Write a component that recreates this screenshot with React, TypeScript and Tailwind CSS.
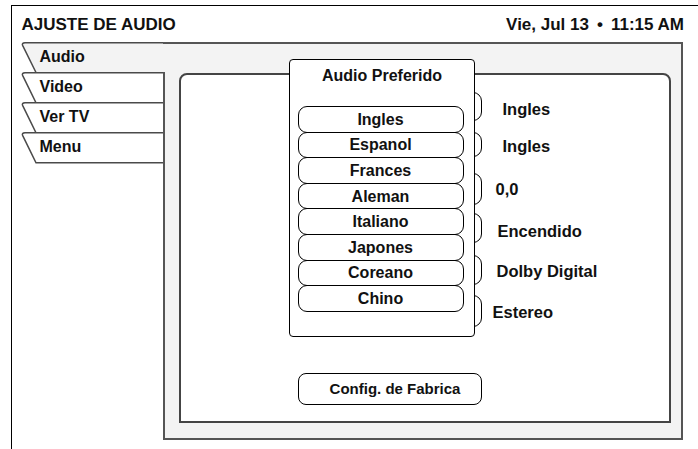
import React from "react";

const tabs = [
  { name: "Audio", active: true },
  { name: "Video" },
  { name: "Ver TV" },
  { name: "Menu" },
];

const languages = [
  "Ingles",
  "Espanol",
  "Frances",
  "Aleman",
  "Italiano",
  "Japones",
  "Coreano",
  "Chino",
];

// rows behind the dialog: the buttons are covered, only their right ends show
const settings = [
  { value: "Ingles", row: "h-[29px]", text: "ml-[21px] pt-[7px]" },
  { value: "Ingles", row: "mt-[11px] h-[25px]", text: "ml-[21px] pt-[5px]" },
  { value: "0,0", row: "mt-[16px] h-[32px]", text: "ml-[14px] pt-[2px]" },
  { value: "Encendido", row: "mt-[8px] h-[30px]", text: "ml-[16px] pt-[8px]" },
  { value: "Dolby Digital", row: "mt-[12px] h-[30px]", text: "ml-[15px] pt-[4px]" },
  { value: "Estereo", row: "mt-[10px] h-[32px]", text: "ml-[11px] pt-[4px]" },
];

const Tab: React.FC<{ name: string; active?: boolean }> = ({ name, active }) => (
  <div className="relative flex h-[30px] w-[142px] items-center">
    <svg
      className="absolute left-0 top-0 overflow-visible"
      width="142"
      height="31"
      viewBox="0 0 142 31"
    >
      <path
        d="M142 0.75 H4 Q0.5 0.75 1.6 3.4 L15 31 H142 Z"
        fill={active ? "#f3f3f3" : "#ffffff"}
        stroke="none"
      />
      <path
        d={
          active
            ? "M142 0.75 H4 Q0.5 0.75 1.6 3.4 L15 30.5"
            : "M142 0.75 H4 Q0.5 0.75 1.6 3.4 L15 30.75 H142"
        }
        fill="none"
        stroke="#4a4a4a"
        strokeWidth="1.5"
      />
    </svg>
    <span className="relative ml-[19px] text-[16px] leading-none">{name}</span>
  </div>
);

export default function App() {
  return (
    <div className="relative h-[449px] w-[698px] overflow-hidden bg-white pl-[11px] pt-[5px] font-['Liberation_Sans',Arial,sans-serif] font-bold text-[#111]">
      <div className="h-[444px] border-l-[1.5px] border-t-[1.5px] border-black">
        {/* Header */}
        <div className="flex h-[35.5px] items-center justify-between pl-[9.5px] pr-[14px] pt-[1px] text-[17px] leading-none">
          <span>AJUSTE DE AUDIO</span>
          <span className="flex items-center">
            Vie, Jul 13
            <span className="mx-[8px]">•</span>
            11:15 AM
          </span>
        </div>

        <div className="ml-[8.5px] w-[662px]">
          {/* Active tab row */}
          <div className="flex h-[30px]">
            <Tab name={tabs[0].name} active />
            <div className="flex-1 border-r-2 border-t-2 border-[#555] bg-[#f3f3f3]" />
          </div>

          <div className="flex h-[368px]">
            {/* Other tabs */}
            <div className="w-[142px]">
              {tabs.slice(1).map((t) => (
                <Tab key={t.name} name={t.name} />
              ))}
            </div>

            {/* Gray panel */}
            <div className="flex-1 border-b-2 border-l-2 border-r-2 border-[#555] bg-[#f3f3f3] pb-[15px] pl-[14px] pr-[10px] pt-[1px]">
              <div className="h-[350px] rounded-t-[8px] border-2 border-[#444] bg-white pl-[117px] pt-[17px]">
                {settings.map((s, i) => (
                  <div key={i} className={`flex items-center ${s.row}`}>
                    <div className="h-full w-[184px] rounded-[9px] border-[1.5px] border-black bg-white" />
                    <span className={`text-[16.5px] leading-none ${s.text}`}>
                      {s.value}
                    </span>
                  </div>
                ))}
                <div className="mt-[46px] flex h-[32px] w-[184px] items-center justify-center rounded-[8px] border-[1.5px] border-black pl-[11px] text-[15px] leading-none">
                  Config. de Fabrica
                </div>
              </div>
            </div>
          </div>
        </div>
      </div>

      {/* Audio Preferido dialog */}
      <div className="absolute left-[289px] top-[59px] h-[278px] w-[186px] rounded-[4px] border-[1.5px] border-black bg-white">
        <div className="pt-[7px] text-center text-[16px] leading-[18px]">
          Audio Preferido
        </div>
        <div className="ml-[7.5px] mt-[21px] w-[166px]">
          {languages.map((lang, i) => (
            <div
              key={lang}
              className={`flex h-[26.6px] items-center justify-center rounded-[9px] border-[1.5px] border-black pt-[1px] text-[16px] leading-none ${
                i > 0 ? "-mt-px" : ""
              }`}
            >
              {lang}
            </div>
          ))}
        </div>
      </div>
    </div>
  );
}
